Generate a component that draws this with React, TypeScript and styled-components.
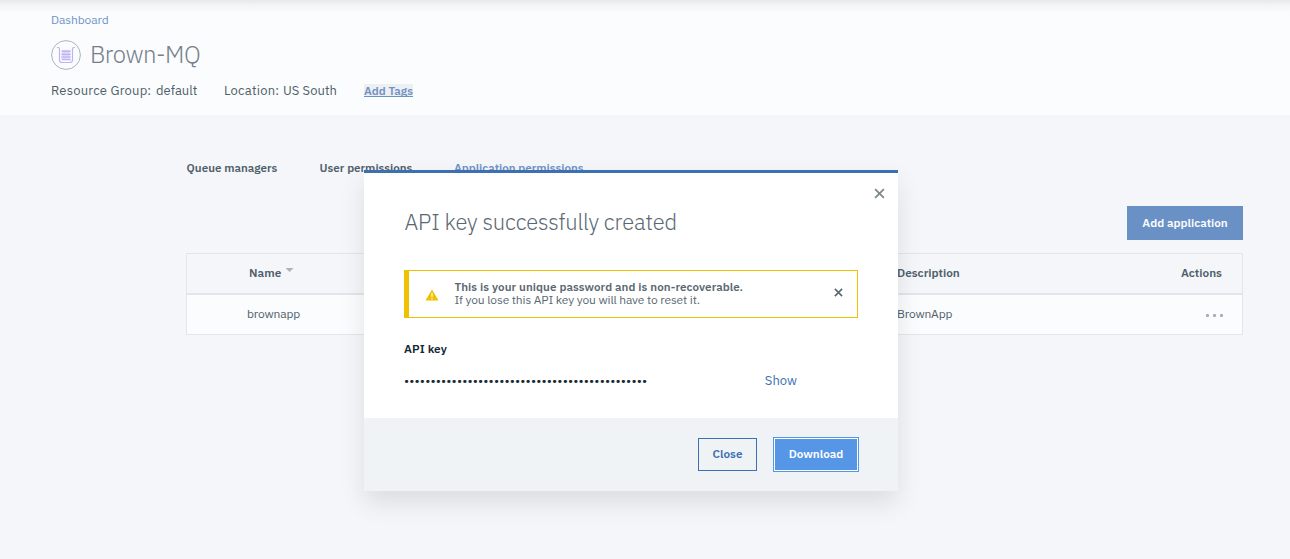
import React from "react";
import styled, { createGlobalStyle } from "styled-components";

const Global = createGlobalStyle`
  * { box-sizing: border-box; }
  body { margin: 0; background: #f5f6fa; font-family: "IBM Plex Sans", Roboto, "Liberation Sans", sans-serif; color: #50606b; overflow: hidden; }
  button { font-family: inherit; padding: 0; }
  b { font-weight: 600; font-size: 11.6px; }
`;

const Label = styled.span<{ $track?: number }>`
  letter-spacing: ${(p) => p.$track ?? 0}px;
  white-space: nowrap;
`;

const Page = styled.div`
  position: relative;
  width: 1290px;
  height: 559px;
`;

const Header = styled.header`
  height: 115px;
  padding: 12px 0 0 51px;
  background: linear-gradient(#e7e8e9 0, #f3f4f5 5px, #fbfcfe 13px);
`;

const Crumb = styled.a`
  display: block;
  height: 16px;
  font-size: 12px;
  line-height: 16px;
  color: #6f93c6;
`;

const TitleRow = styled.div`
  display: flex;
  align-items: center;
  height: 30px;
  margin-top: 12px;
  gap: 9px;
`;

const Title = styled.h1`
  margin: 0;
  font-size: 24px;
  font-weight: 300;
  height: 30px;
  line-height: 28px;
  color: #75808a;
`;

const Meta = styled.div`
  display: flex;
  height: 18px;
  margin-top: 12px;
  font-size: 13px;
  line-height: 18px;
  color: #4f5f69;
`;

const MetaItem = styled.div<{ $width: number }>`
  display: flex;
  flex: none;
  width: ${(p) => p.$width}px;
`;

const TagLink = styled.a`
  align-self: flex-start;
  height: 13px;
  margin-top: 2px;
  background: #eeeff2;
  border-bottom: 1px solid #6f93c6;
  font-size: 11.6px;
  line-height: 14px;
  font-weight: 600;
  color: #6f93c6;
`;

const Main = styled.main`
  padding: 45px 47px 0 186px;
`;

const Tabs = styled.nav`
  display: flex;
  height: 16px;
  font-size: 11.6px;
  line-height: 16px;
  font-weight: 600;
`;

const Tab = styled.a<{ $width: number; $active?: boolean }>`
  flex: none;
  width: ${(p) => p.$width}px;
  padding-left: ${(p) => (p.$active ? 0 : 0.6)}px;
  color: ${(p) => (p.$active ? "#6f93c6" : "#50606b")};
`;

const Toolbar = styled.div`
  display: flex;
  justify-content: flex-end;
  margin: 30px 0 13px;
`;

const AddButton = styled.button`
  width: 116px;
  height: 34px;
  padding-bottom: 1px;
  border: 0;
  background: #6a91c5;
  color: #fbfcfe;
  font-size: 11.7px;
  font-weight: 600;
`;

const Table = styled.div`
  border: 1px solid #e3e5e8;
`;

const Row = styled.div<{ $head?: boolean }>`
  display: grid;
  grid-template-columns: 60px 650px 1fr auto;
  align-items: center;
  height: ${(p) => (p.$head ? 41 : 39)}px;
  padding-right: ${(p) => (p.$head ? 20 : 19)}px;
  padding-bottom: 2px;
  border-bottom: ${(p) => (p.$head ? "2px solid #e3e5e8" : "0")};
  background: ${(p) => (p.$head ? "#f5f6fa" : "#fbfcfe")};
  font-size: ${(p) => (p.$head ? 11.8 : 12)}px;
  font-weight: ${(p) => (p.$head ? 600 : 400)};
`;

const NameHead = styled.span`
  display: flex;
  gap: 4px;
  padding-left: 2px;
`;

const Caret = styled.i`
  width: 8px;
  height: 4px;
  margin-top: 3px;
  background: #a9b3b9;
  clip-path: polygon(0 0, 100% 0, 50% 100%);
`;

const Dots = styled.span`
  display: flex;
  gap: 4px;
  padding-top: 3px;
  i { width: 3px; height: 3px; border-radius: 1px; background: #a5afb5; }
`;

const Modal = styled.section`
  position: absolute;
  top: 170px;
  left: 364px;
  width: 534px;
  height: 321px;
  border-top: 3px solid #3d70b2;
  background: #fff;
  box-shadow: 0 12px 24px rgba(0, 0, 0, 0.1);
  display: flex;
  flex-direction: column;
`;

const ModalTop = styled.div`
  display: flex;
  justify-content: flex-end;
  height: 35px;
  padding: 15px 13px 0 0;
`;

const ModalBody = styled.div`
  flex: 1;
  padding: 0 40px;
`;

const ModalTitle = styled.h2`
  margin: 0;
  padding-left: 0.5px;
  font-size: 22px;
  font-weight: 300;
  height: 28px;
  line-height: 27px;
  color: #5a6872;
`;

const Notice = styled.div`
  display: flex;
  height: 48px;
  margin-top: 34px;
  padding: 9px 14px 0 16px;
  border: 1px solid #efc100;
  border-left-width: 5px;
  color: #5a6872;
  font-size: 12px;
  line-height: 13px;
`;

const NoticeText = styled.div`
  flex: 1;
  display: flex;
  flex-direction: column;
  padding-left: 15.4px;
`;

const KeyLabel = styled.div`
  margin-top: 23px;
  font-size: 11.8px;
  line-height: 16px;
  font-weight: 600;
  color: #152935;
`;

const KeyRow = styled.div`
  display: flex;
  justify-content: space-between;
  align-items: center;
  height: 18px;
  margin-top: 15px;
  padding-right: 61px;
  font-size: 13px;
  line-height: 18px;
  color: #152935;
`;

const ShowLink = styled.a`
  color: #3d70b2;
`;

const Footer = styled.footer`
  display: flex;
  justify-content: flex-end;
  align-items: center;
  gap: 16px;
  height: 73px;
  padding-right: 39px;
  background: #eff3f6;
`;

const FooterButton = styled.button<{ $primary?: boolean }>`
  width: ${(p) => (p.$primary ? 86 : 59)}px;
  height: ${(p) => (p.$primary ? 35 : 33)}px;
  padding-bottom: 2px;
  border: 1px solid ${(p) => (p.$primary ? "#5596e6" : "#3d70b2")};
  background: ${(p) => (p.$primary ? "#5596e6" : "transparent")};
  box-shadow: ${(p) => (p.$primary ? "inset 0 0 0 1px #fff" : "none")};
  color: ${(p) => (p.$primary ? "#fff" : "#3d70b2")};
  font-size: 11.7px;
  font-weight: 600;
`;

const QueueIcon = () => (
  <svg width="30" height="30" viewBox="0 0 30 30" fill="none">
    <circle cx="15" cy="15" r="14.4" stroke="#a9b4bc" />
    <path d="M6 7.500h1q1.500 0 1.500 1.500v11q0 2.500 2.500 2.500h8q2.500 0 2.500-2.500V9q0-1.500 1.500-1.500h1" stroke="#c0b3f0" strokeWidth="1.2" />
    <path d="M11 9.800h8v10h-8z" fill="#ddd7f8" />
    <path d="M10.500 11.200h9.500M10 14.200h10M10 17h10M10.500 19.700h9.500" stroke="#b9acf0" strokeWidth="1.100" />
  </svg>
);

const WarningIcon = () => (
  <svg width="14" height="12" viewBox="0 0 14 12" style={{ marginTop: 9 }}>
    <path d="M7 .5 13.500 11.500H.5z" fill="#efc100" />
    <path d="M7 4v4M7 9v1.300" stroke="#fff" strokeWidth="1.200" />
  </svg>
);

const CloseIcon = ({ size, color, weight }: { size: number; color: string; weight: number }) => (
  <svg width={size} height={size} viewBox="0 0 10 10">
    <path d="M1 1l8 8M9 1L1 9" stroke={color} strokeWidth={weight} />
  </svg>
);

const NoticeClose = styled.span`
  display: flex;
  padding-top: 8px;
  height: 20px;
`;

export default function App() {
  return (
    <Page>
      <Global />
      <Header>
        <Crumb><Label $track={-0.1}>Dashboard</Label></Crumb>
        <TitleRow>
          <QueueIcon />
          <Title><Label $track={-0.5}>Brown-MQ</Label></Title>
        </TitleRow>
        <Meta>
          <MetaItem $width={105}><Label $track={0.2}>Resource Group:</Label></MetaItem>
          <MetaItem $width={68}><Label>default</Label></MetaItem>
          <MetaItem $width={59}><Label $track={0.2}>Location:</Label></MetaItem>
          <MetaItem $width={81}><Label $track={0.05}>US South</Label></MetaItem>
          <TagLink><Label>Add Tags</Label></TagLink>
        </Meta>
      </Header>
      <Main>
        <Tabs>
          <Tab $width={133}><Label>Queue managers</Label></Tab>
          <Tab $width={135}><Label>User permissions</Label></Tab>
          <Tab $width={140} $active><Label>Application permissions</Label></Tab>
        </Tabs>
        <Toolbar><AddButton><Label>Add application</Label></AddButton></Toolbar>
        <Table>
          <Row $head>
            <span />
            <NameHead><Label $track={0.1}>Name</Label><Caret /></NameHead>
            <Label>Description</Label>
            <Label>Actions</Label>
          </Row>
          <Row>
            <span />
            <Label $track={-0.15}>brownapp</Label>
            <Label $track={-0.15}>BrownApp</Label>
            <Dots><i /><i /><i /></Dots>
          </Row>
        </Table>
      </Main>
      <Modal>
        <ModalTop><CloseIcon size={11} color="#7c8890" weight={1.6} /></ModalTop>
        <ModalBody>
          <ModalTitle><Label $track={-0.16}>API key successfully created</Label></ModalTitle>
          <Notice>
            <WarningIcon />
            <NoticeText>
              <b><Label $track={0.08}>This is your unique password and is non-recoverable.</Label></b>
              <Label $track={-0.14}>If you lose this API key you will have to reset it.</Label>
            </NoticeText>
            <NoticeClose><CloseIcon size={9} color="#5a6872" weight={1.8} /></NoticeClose>
          </Notice>
          <KeyLabel><Label $track={0.1}>API key</Label></KeyLabel>
          <KeyRow>
            <Label $track={0.14}>{"•".repeat(46)}</Label>
            <ShowLink><Label>Show</Label></ShowLink>
          </KeyRow>
        </ModalBody>
        <Footer>
          <FooterButton><Label>Close</Label></FooterButton>
          <FooterButton $primary><Label>Download</Label></FooterButton>
        </Footer>
      </Modal>
    </Page>
  );
}
